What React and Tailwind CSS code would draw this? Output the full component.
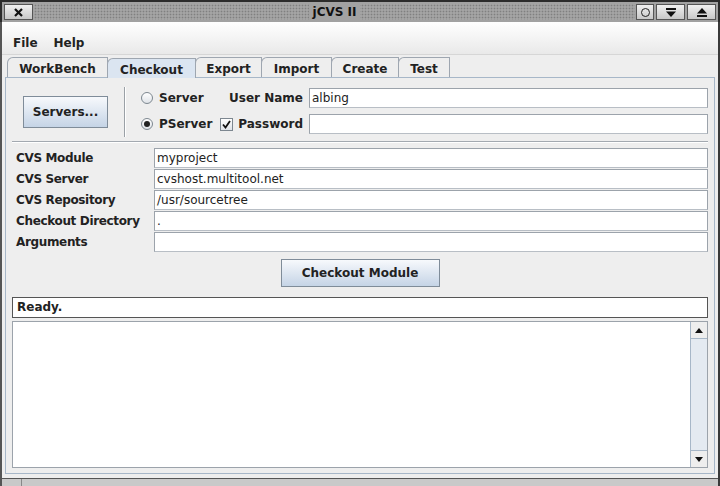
import { useState } from "react";

const font = "font-['DejaVu_Sans',sans-serif]";

const tabs = [
    { label: "WorkBench", w: "w-[101px]" },
    { label: "Checkout", w: "w-[89px]" },
    { label: "Export", w: "w-[67px]" },
    { label: "Import", w: "w-[71px]" },
    { label: "Create", w: "w-[68px]" },
    { label: "Test", w: "w-[52px]" },
];

const fields = [
    { label: "CVS Module", value: "myproject" },
    { label: "CVS Server", value: "cvshost.multitool.net" },
    { label: "CVS Repository", value: "/usr/sourcetree" },
    { label: "Checkout Directory", value: "." },
    { label: "Arguments", value: "" },
];

function TextField({ value, className = "" }) {
    return (
        <div
            className={`h-[20px] border border-[#9ca3ab] border-b-[#b8bec5] bg-white pl-[2px] text-[12px] leading-[18px] text-[#222] whitespace-nowrap overflow-hidden ${className}`}
        >
            {value}
        </div>
    );
}

function Radio({ checked }) {
    return (
        <span className="flex h-[12px] w-[12px] items-center justify-center rounded-full border border-[#7d8790] bg-gradient-to-b from-[#ffffff] to-[#dfe3e8]">
            {checked && <span className="h-[6px] w-[6px] rounded-full bg-[#222]" />}
        </span>
    );
}

export default function App() {
    const [tab, setTab] = useState("Checkout");
    const [pserver, setPserver] = useState(true);

    return (
        <div className={`${font} flex h-[486px] w-[720px] flex-col overflow-hidden bg-[#eeeeee] text-[#222]`}>
            {/* Title bar */}
            <div className="flex h-[22px] shrink-0 items-center border-t-2 border-l-2 border-r-2 border-[#2b2b2b] bg-[#a2a2a2] px-[2px] py-[1px]">
                <div className="flex h-[16px] w-[29px] items-center justify-center border border-[#555] bg-gradient-to-b from-[#f0f0f0] to-[#c8c8c8]">
                    <svg width="9" height="9" viewBox="0 0 9 9">
                        <path d="M1 1 L8 8 M8 1 L1 8" stroke="#111" strokeWidth="2.2" />
                    </svg>
                </div>
                <div className="mx-[1px] flex h-[16px] flex-1 items-center justify-center bg-[#a4a4a4] bg-[radial-gradient(circle,#808080_40%,transparent_50%)] bg-[length:3px_3px]">
                    <span className="bg-[#a2a2a2] px-[4px] text-[12px] font-bold leading-[16px] text-[#111]">jCVS II</span>
                </div>
                <div className="flex h-[16px] w-[18px] items-center justify-center border border-[#555] bg-gradient-to-b from-[#f0f0f0] to-[#c8c8c8]">
                    <span className="h-[9px] w-[9px] rounded-full border border-[#222]" />
                </div>
                <div className="ml-[2px] flex h-[16px] w-[29px] items-center justify-center border border-[#555] bg-gradient-to-b from-[#f0f0f0] to-[#c8c8c8]">
                    <svg width="10" height="9" viewBox="0 0 10 9">
                        <rect x="0" y="0" width="10" height="2" fill="#111" />
                        <path d="M0 3.5 H10 L5 9 Z" fill="#111" />
                    </svg>
                </div>
                <div className="ml-[2px] flex h-[16px] w-[29px] items-center justify-center border border-[#555] bg-gradient-to-b from-[#f0f0f0] to-[#c8c8c8]">
                    <svg width="10" height="9" viewBox="0 0 10 9">
                        <path d="M5 0 L10 5.5 H0 Z" fill="#111" />
                        <rect x="0" y="7" width="10" height="2" fill="#111" />
                    </svg>
                </div>
            </div>

            {/* Window body */}
            <div className="flex flex-1 flex-col border-l-2 border-r-2 border-[#3a3a3a] border-l-[#555]">
                {/* Menu bar */}
                <div className="flex h-[33px] shrink-0 items-end gap-[16px] border-b border-[#d6d6d6] bg-gradient-to-b from-[#ffffff] to-[#e9e9e9] pb-[2px] pl-[11px] text-[12px] font-bold">
                    <span>File</span>
                    <span>Help</span>
                </div>

                {/* Tabs */}
                <div className="flex h-[22px] shrink-0 items-end pl-[5px] pt-[2px]">
                    {tabs.map((t) => (
                        <button
                            key={t.label}
                            onClick={() => setTab(t.label)}
                            className={`${t.w} -mr-px flex h-full items-center justify-center rounded-tl-[6px] border border-b-0 border-[#9ea6b0] pt-[2px] text-[12px] font-bold leading-none ${
                                tab === t.label ? "relative z-10 -mb-px h-[21px] bg-[#dbe5f1]" : "bg-[#eeeeee]"
                            }`}
                        >
                            {t.label}
                        </button>
                    ))}
                </div>

                {/* Tab panel */}
                <div className="mx-[3px] flex flex-1 flex-col border border-[#a7b7c8] px-[6px] pb-[5px]">
                    {/* Server section */}
                    <div className="flex h-[63px] shrink-0">
                        <div className="flex w-[112px] items-center pl-[11px] pt-[4px]">
                            <button className="h-[32px] w-[85px] border border-[#7f8c99] bg-gradient-to-b from-[#f7f9fc] to-[#c5d4e6] text-[12px] font-bold">
                                Servers...
                            </button>
                        </div>
                        <div className="mt-[9px] mb-[4px] border-l border-r border-l-[#9aa0a6] border-r-white" />
                        <div className="flex flex-1 flex-col gap-[6px] pt-[10px]">
                            <div className="flex items-center">
                                <label className="ml-[15px] flex w-[78px] items-center gap-[6px] text-[12px] font-bold" onClick={() => setPserver(false)}>
                                    <Radio checked={!pserver} />
                                    <span>Server</span>
                                </label>
                                <span className="w-[90px] pr-[6px] text-right text-[12px] font-bold">User Name</span>
                                <TextField value="albing" className="flex-1" />
                            </div>
                            <div className="flex items-center">
                                <label className="ml-[15px] flex w-[78px] items-center gap-[6px] text-[12px] font-bold" onClick={() => setPserver(true)}>
                                    <Radio checked={pserver} />
                                    <span>PServer</span>
                                </label>
                                <div className="flex w-[90px] items-center justify-end gap-[5px] pr-[6px]">
                                    <span className="flex h-[13px] w-[13px] items-center justify-center border border-[#7d8790] bg-gradient-to-b from-[#ffffff] to-[#dfe3e8]">
                                        <svg width="9" height="9" viewBox="0 0 9 9">
                                            <path d="M1 4.5 L3.5 7.5 L8 1" fill="none" stroke="#111" strokeWidth="1.8" />
                                        </svg>
                                    </span>
                                    <span className="text-[12px] font-bold">Password</span>
                                </div>
                                <TextField value="" className="flex-1" />
                            </div>
                        </div>
                    </div>

                    {/* Separator */}
                    <div className="h-[2px] shrink-0 border-t border-b border-t-[#a3a9b0] border-b-white" />

                    {/* Form rows */}
                    <div className="mt-[5px] grid shrink-0 grid-cols-[138px_1fr] gap-y-[1px] pl-[4px]">
                        {fields.map((f) => (
                            <div key={f.label} className="contents">
                                <span className="text-[12px] font-bold leading-[20px] tracking-[-0.35px] whitespace-nowrap">{f.label}</span>
                                <TextField value={f.value} />
                            </div>
                        ))}
                    </div>

                    {/* Checkout button */}
                    <div className="mt-[7px] flex shrink-0 justify-center">
                        <button className="h-[28px] w-[159px] border border-[#7f8c99] bg-gradient-to-b from-[#f7f9fc] to-[#c5d4e6] text-[12px] font-bold">
                            Checkout Module
                        </button>
                    </div>

                    {/* Status */}
                    <div className="mt-[10px] h-[21px] shrink-0 border border-[#555] bg-white pl-[4px] text-[12px] font-bold leading-[19px]">
                        Ready.
                    </div>

                    {/* Output area */}
                    <div className="mt-[3px] flex flex-1 border border-[#9ca3ab] bg-white">
                        <div className="flex-1" />
                        <div className="flex w-[17px] flex-col border-l border-[#a7b7c8] bg-[#e4eaf1]">
                            <div className="flex h-[17px] items-center justify-center border-b border-[#a7b7c8] bg-[#eeeeee]">
                                <svg width="8" height="5" viewBox="0 0 8 5">
                                    <path d="M4 0 L8 5 H0 Z" fill="#111" />
                                </svg>
                            </div>
                            <div className="flex-1" />
                            <div className="flex h-[17px] items-center justify-center border-t border-[#a7b7c8] bg-[#eeeeee]">
                                <svg width="8" height="5" viewBox="0 0 8 5">
                                    <path d="M0 0 H8 L4 5 Z" fill="#111" />
                                </svg>
                            </div>
                        </div>
                    </div>
                </div>

                {/* Bottom strip */}
                <div className="mt-[4px] flex h-[8px] shrink-0 border-t border-[#555] bg-[#c9c9c9]">
                    <div className="w-[20px] border-r border-[#888]" />
                </div>
            </div>
        </div>
    );
}
